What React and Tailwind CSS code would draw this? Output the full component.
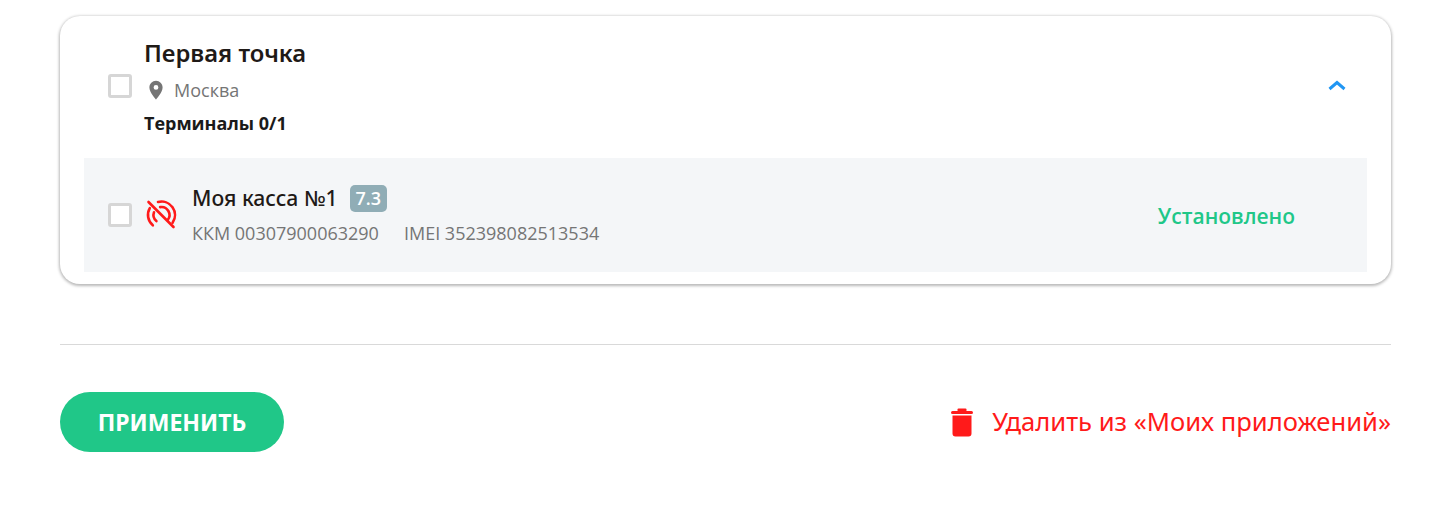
import React from "react";

const Check = () => (
  <div className="w-6 h-6 shrink-0 rounded-[3px] border-[3px] border-[#d6d6d6] bg-white" />
);

export default function App() {
  return (
    <div className="w-[1451px] h-[512px] bg-white px-[60px] pt-4 font-['Open_Sans',sans-serif]">
      <div className="rounded-[20px] bg-white px-6 pb-3 shadow-[0_1px_3px_1px_rgba(0,0,0,0.28)] h-[268px]">
        <div className="flex items-center h-[142px] pl-6 pb-[2px]">
          <Check />
          <div className="ml-3 flex-1 -mb-[1px]">
            <div className="-mt-[1px] mb-[1px] text-[23.8px] leading-[30px] font-['Noto_Sans',sans-serif] font-semibold text-[#1f1a17]">Первая точка</div>
            <div className="mt-[10px] flex items-center">
              <svg width="24" height="24" viewBox="0 0 24 24" className="shrink-0" fill="#757575">
                <path d="M12 2.800c-3.600 0-6.600 3-6.600 6.600 0 4.900 6.600 12 6.600 12s6.600-7.100 6.600-12c0-3.600-3-6.600-6.600-6.600zm0 9a2.400 2.400 0 1 1 0-4.800 2.400 2.400 0 0 1 0 4.800z" />
              </svg>
              <span className="ml-[6px] text-lg leading-6 text-[#757575]">Москва</span>
            </div>
            <div className="mt-[9px] text-lg leading-6 font-bold text-[#1a1a1a] tracking-[-0.02px]">Терминалы 0/1</div>
          </div>
          <svg width="24" height="24" viewBox="0 0 24 24" className="mr-[18px] -mt-[2px]" fill="none" stroke="#2196f3" strokeWidth="3">
            <path d="M4.500 16 12 9.500l7.500 6.500" />
          </svg>
        </div>
        <div className="flex items-center h-[114px] bg-[#f4f6f8] pl-6">
          <Check />
          <svg width="34" height="34" viewBox="0 0 34 34" className="ml-[13px] shrink-0" fill="none" stroke="#ff1a1a" strokeWidth="2.600" strokeLinecap="round">
            <path d="M13 4A13.500 13.500 0 0 1 27.600 24.700" />
            <path d="M4.800 10.200A13.500 13.500 0 0 0 7.800 27.300" />
            <path d="M15.100 9.100A8 8 0 0 1 22.600 22.100" />
            <path d="M9 14.300A8 8 0 0 0 11.400 23.100" />
            <path d="M3.500 4L28.500 29" />
          </svg>
          <div className="ml-[13px] flex-1">
            <div className="flex items-center">
              <span className="text-[21.2px] leading-7 -mt-[2px] font-['Noto_Sans',sans-serif] font-medium text-[#1f1a17]">Моя касса №1</span>
              <span className="ml-[12px] w-[37px] h-[27px] rounded-[5px] bg-[#90adb6] text-white font-semibold text-lg leading-[27px] text-center">7.3</span>
            </div>
            <div className="mt-[9px] text-lg leading-6 text-[#757575] flex">
              <span>ККМ 00307900063290</span>
              <span className="ml-[25px]">IMEI 352398082513534</span>
            </div>
          </div>
          <span className="mr-[72px] mt-[3px] text-[21px] font-semibold text-[#20c788]">Установлено</span>
        </div>
      </div>
      <div className="mt-[60px] border-t border-[#d9d9d9]" />
      <div className="mt-[47px] flex items-center justify-between">
        <button className="w-[224px] h-[60px] rounded-[30px] bg-[#20c788] text-white text-[23px] font-bold font-['Noto_Sans',sans-serif]">ПРИМЕНИТЬ</button>
        <div className="flex items-center">
          <svg width="22" height="30" viewBox="0 0 22 30" fill="#ff1a1a" className="mr-[19px]">
            <rect x="0" y="4" width="22" height="3" rx="1.500" />
            <rect x="6.500" y="1.600" width="9" height="3" rx="1" />
            <path d="M1.500 8.500h19v18a3 3 0 0 1-3 3h-13a3 3 0 0 1-3-3z" />
          </svg>
          <span className="text-[25.6px] font-['Noto_Sans',sans-serif] text-[#ff1a1a]">Удалить из «Моих приложений»</span>
        </div>
      </div>
    </div>
  );
}
